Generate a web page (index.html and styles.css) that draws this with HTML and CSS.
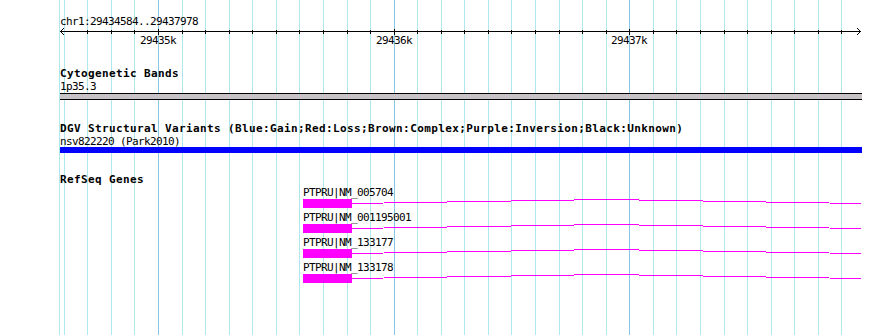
FILE: index.html
```html
<!DOCTYPE html>
<html lang="en">
<head>
    <meta charset="UTF-8">
    <title>chr1:29434584..29437978</title>
    <link rel="stylesheet" href="styles.css">
</head>
<body>
<div class="panel">
    <!-- grid: one line every 100 bp, bolder every 1 kb -->
    <svg class="grid" width="890" height="335">
        <line x1="59.5" y1="0" x2="59.5" y2="335"/>
        <line x1="64.5" y1="0" x2="64.5" y2="335"/>
        <line x1="87.5" y1="0" x2="87.5" y2="335"/>
        <line x1="111.5" y1="0" x2="111.5" y2="335"/>
        <line x1="134.5" y1="0" x2="134.5" y2="335"/>
        <line class="major" x1="158.5" y1="0" x2="158.5" y2="335"/>
        <line x1="182.5" y1="0" x2="182.5" y2="335"/>
        <line x1="205.5" y1="0" x2="205.5" y2="335"/>
        <line x1="229.5" y1="0" x2="229.5" y2="335"/>
        <line x1="252.5" y1="0" x2="252.5" y2="335"/>
        <line x1="276.5" y1="0" x2="276.5" y2="335"/>
        <line x1="299.5" y1="0" x2="299.5" y2="335"/>
        <line x1="323.5" y1="0" x2="323.5" y2="335"/>
        <line x1="347.5" y1="0" x2="347.5" y2="335"/>
        <line x1="370.5" y1="0" x2="370.5" y2="335"/>
        <line class="major" x1="394.5" y1="0" x2="394.5" y2="335"/>
        <line x1="417.5" y1="0" x2="417.5" y2="335"/>
        <line x1="441.5" y1="0" x2="441.5" y2="335"/>
        <line x1="464.5" y1="0" x2="464.5" y2="335"/>
        <line x1="488.5" y1="0" x2="488.5" y2="335"/>
        <line x1="511.5" y1="0" x2="511.5" y2="335"/>
        <line x1="535.5" y1="0" x2="535.5" y2="335"/>
        <line x1="559.5" y1="0" x2="559.5" y2="335"/>
        <line x1="582.5" y1="0" x2="582.5" y2="335"/>
        <line x1="606.5" y1="0" x2="606.5" y2="335"/>
        <line class="major" x1="629.5" y1="0" x2="629.5" y2="335"/>
        <line x1="653.5" y1="0" x2="653.5" y2="335"/>
        <line x1="676.5" y1="0" x2="676.5" y2="335"/>
        <line x1="700.5" y1="0" x2="700.5" y2="335"/>
        <line x1="724.5" y1="0" x2="724.5" y2="335"/>
        <line x1="747.5" y1="0" x2="747.5" y2="335"/>
        <line x1="771.5" y1="0" x2="771.5" y2="335"/>
        <line x1="794.5" y1="0" x2="794.5" y2="335"/>
        <line x1="818.5" y1="0" x2="818.5" y2="335"/>
        <line x1="841.5" y1="0" x2="841.5" y2="335"/>
    </svg>

    <svg class="ruler" width="890" height="48">
        <text class="small" x="60" y="25">chr1:29434584..29437978</text>
        <path class="axis" d="M60 31.5H861 M64 28L60.5 31.5L64 35 M857 28L860.5 31.5L857 35"/>
        <path class="axis" d="M87.5 30v4 M111.5 30v4 M134.5 30v4 M158.5 29v6 M182.5 30v4 M205.5 30v4 M229.5 30v4
            M252.5 30v4 M276.5 30v4 M299.5 30v4 M323.5 30v4 M347.5 30v4 M370.5 30v4 M394.5 29v6 M417.5 30v4
            M441.5 30v4 M464.5 30v4 M488.5 30v4 M511.5 30v4 M535.5 30v4 M559.5 30v4 M582.5 30v4 M606.5 30v4
            M629.5 29v6 M653.5 30v4 M676.5 30v4 M700.5 30v4 M724.5 30v4 M747.5 30v4 M771.5 30v4 M794.5 30v4
            M818.5 30v4 M841.5 30v4"/>
        <text class="small" x="158" y="44" text-anchor="middle">29435k</text>
        <text class="small" x="394" y="44" text-anchor="middle">29436k</text>
        <text class="small" x="629" y="44" text-anchor="middle">29437k</text>
    </svg>

    <div class="track cyto">
        <div class="track-title">Cytogenetic Bands</div>
        <div class="feature-label">1p35.3</div>
        <div class="band"></div>
    </div>

    <div class="track dgv">
        <div class="track-title">DGV Structural Variants (Blue:Gain;Red:Loss;Brown:Complex;Purple:Inversion;Black:Unknown)</div>
        <div class="feature-label">nsv822220 (Park2010)</div>
        <div class="variant"></div>
    </div>

    <div class="track refseq">
        <div class="track-title">RefSeq Genes</div>
    </div>

    <div class="genes">
        <svg class="gene" width="890" height="25">
            <text class="small" x="303" y="10">PTPRU|NM_005704</text>
            <rect class="exon" x="303" y="13" width="49" height="9"/>
            <polyline class="intron" points="352,17.5 606.5,13.5 861,17.5"/>
        </svg>
        <svg class="gene" width="890" height="25">
            <text class="small" x="303" y="10">PTPRU|NM_001195001</text>
            <rect class="exon" x="303" y="13" width="49" height="9"/>
            <polyline class="intron" points="352,17.5 606.5,13.5 861,17.5"/>
        </svg>
        <svg class="gene" width="890" height="25">
            <text class="small" x="303" y="10">PTPRU|NM_133177</text>
            <rect class="exon" x="303" y="13" width="49" height="9"/>
            <polyline class="intron" points="352,17.5 606.5,13.5 861,17.5"/>
        </svg>
        <svg class="gene" width="890" height="25">
            <text class="small" x="303" y="10">PTPRU|NM_133178</text>
            <rect class="exon" x="303" y="13" width="49" height="9"/>
            <polyline class="intron" points="352,17.5 606.5,13.5 861,17.5"/>
        </svg>
    </div>
</div>
</body>
</html>
```

FILE: styles.css
```css
body {
    margin: 0;
    background: #ffffff;
}
.panel {
    position: relative;
    width: 890px;
    height: 335px;
    overflow: hidden;
    color: #000;
}
.grid {
    position: absolute;
    left: 0;
    top: 0;
    z-index: 0;
    shape-rendering: crispEdges;
}
.grid line {
    stroke: #aee8ee;
    stroke-width: 1;
}
.grid line.major {
    stroke: #88c6e6;
}
.ruler, .track, .genes {
    position: relative;
    z-index: 1;
}
.ruler, .gene {
    display: block;
    shape-rendering: crispEdges;
}
.small {
    font-family: "DejaVu Sans Mono", monospace;
    font-size: 11px;
    letter-spacing: -0.62px;
    fill: #000;
}
.axis {
    fill: none;
    stroke: #000;
    stroke-width: 1;
}
.track {
    padding-left: 60px;
}
.track-title {
    font: bold 11px "DejaVu Sans Mono", monospace;
    letter-spacing: 0.38px;
    line-height: 13px;
    height: 13px;
    white-space: nowrap;
}
.feature-label {
    font: 11px "DejaVu Sans Mono", monospace;
    letter-spacing: -0.62px;
    line-height: 13px;
    height: 12px;
    white-space: nowrap;
}
.cyto {
    margin-top: 19px;
}
.band {
    width: 802px;
    height: 5px;
    margin-top: 1px;
    background: #c6c2c6;
    border-top: 1px solid #000;
    border-bottom: 1px solid #000;
}
.dgv {
    margin-top: 22px;
}
.variant {
    width: 802px;
    height: 6px;
    background: #0000ff;
}
.refseq {
    margin-top: 20px;
}
.exon {
    fill: #ff00ff;
}
.intron {
    fill: none;
    stroke: #ff00ff;
    stroke-width: 1;
}
```
